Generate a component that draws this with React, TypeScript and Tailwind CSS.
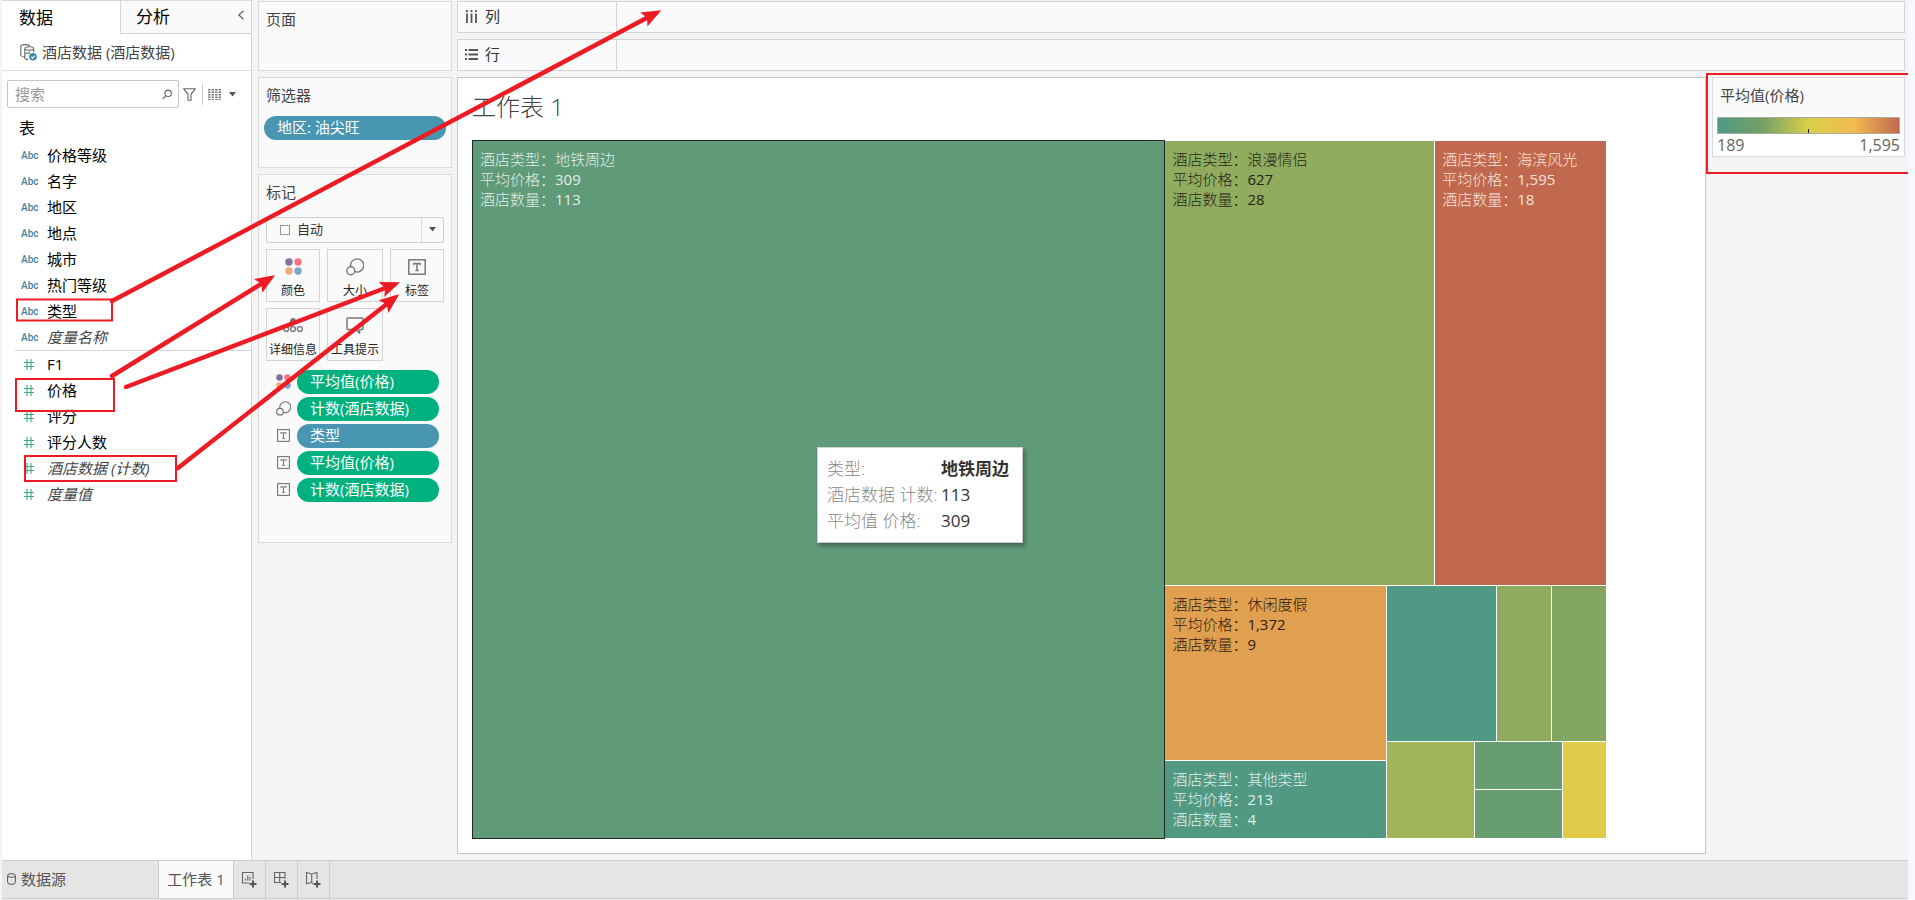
import type { ReactNode } from 'react';

type Field = { name: string; italic?: boolean };

const dimensions: Field[] = [
  { name: '价格等级' },
  { name: '名字' },
  { name: '地区' },
  { name: '地点' },
  { name: '城市' },
  { name: '热门等级' },
  { name: '类型' },
  { name: '度量名称', italic: true },
];

const measures: Field[] = [
  { name: 'F1' },
  { name: '价格' },
  { name: '评分' },
  { name: '评分人数' },
  { name: '酒店数据 (计数)', italic: true },
  { name: '度量值', italic: true },
];

function Caret() {
  return (
    <svg width="7" height="5" viewBox="0 0 7 5" aria-hidden="true">
      <path d="M0 0h7L3.5 4.5z" fill="#555" />
    </svg>
  );
}

function ColorIcon({ size }: { size: number }) {
  return (
    <svg width={size} height={size} viewBox="0 0 17 17" aria-hidden="true">
      <circle cx="4" cy="4" r="3.7" fill="#85709c" />
      <circle cx="13" cy="4" r="3.7" fill="#fa7480" />
      <circle cx="4" cy="13" r="3.7" fill="#f5a878" />
      <circle cx="13" cy="13" r="3.7" fill="#7ca3cb" />
    </svg>
  );
}

function SizeIcon({ size }: { size: number }) {
  return (
    <svg width={size} height={size} viewBox="0 0 18 18" fill="none" stroke="#777" strokeWidth="1.4" aria-hidden="true">
      <path d="M4.600 8.500A6.600 6.600 0 1 1 8.900 13.700" />
      <circle cx="4.800" cy="12.800" r="4" />
    </svg>
  );
}

function LabelIcon({ small }: { small?: boolean }) {
  return (
    <svg width={small ? 13 : 18} height={small ? 13 : 16} viewBox={small ? '0 0 13 13' : '0 0 18 16'} fill="none" stroke="#777" aria-hidden="true">
      {small ? (
        <>
          <rect x="0.6" y="0.6" width="11.8" height="11.8" strokeWidth="1.1" />
          <path d="M4 5V3.7h5V5M6.5 3.7v5.8M5.2 9.5h2.6" strokeWidth="1.1" />
        </>
      ) : (
        <>
          <rect x="0.8" y="0.8" width="16.4" height="14.4" strokeWidth="1.5" />
          <path d="M6 6.2V4.5h6v1.7M9 4.5v7M7.3 11.5h3.4" strokeWidth="1.5" />
        </>
      )}
    </svg>
  );
}

function DetailIcon() {
  return (
    <svg width="20" height="15" viewBox="0 0 20 15" fill="none" stroke="#777" strokeWidth="1.4" aria-hidden="true">
      <circle cx="10" cy="3" r="2.3" fill="#777" />
      <circle cx="3.2" cy="11" r="2.4" />
      <circle cx="10" cy="11" r="2.4" />
      <circle cx="16.8" cy="11" r="2.4" />
    </svg>
  );
}

function TooltipIcon() {
  return (
    <svg width="18" height="17" viewBox="0 0 18 17" fill="none" stroke="#777" strokeWidth="1.5" aria-hidden="true">
      <path d="M2 1h14a1 1 0 0 1 1 1v9.5a1 1 0 0 1-1 1h-2.5V16L9.8 12.5H2a1 1 0 0 1-1-1V2a1 1 0 0 1 1-1z" />
    </svg>
  );
}

function DataPane() {
  return (
    <aside className="flex w-[250px] shrink-0 flex-col border-r border-[#d4d4d4] bg-white">
      <div className="flex h-[34px] border-t border-[#d9d9d9]">
        <button type="button" className="w-[118px] pl-[17px] text-left text-[17px] text-black">数据</button>
        <div className="flex flex-1 items-center justify-between border-b border-l border-[#d4d4d4] bg-[#fafafa] pr-1.5 pl-[15px]">
          <button type="button" className="text-[17px] text-black">分析</button>
          <button type="button" aria-label="折叠" className="pb-1">
            <svg width="8" height="10" viewBox="0 0 8 10" fill="none" stroke="#666" strokeWidth="1.3"><path d="M6.5 .8 1.8 5l4.7 4.2" /></svg>
          </button>
        </div>
      </div>
      <button type="button" className="flex h-[37px] items-center gap-[5px] border-b border-[#dedede] pl-[18px] text-[15px] text-[#444]">
        <svg width="17" height="17" viewBox="0 0 17 17" fill="none" stroke="#666" strokeWidth="1.1" aria-hidden="true">
          <path d="M5 13C2.5 13 .8 12 .8 11V2.3C.8 1.3 2.4.6 5 .6s4.5.7 4.5 1.7" />
          <path d="M9.5 2.8c2.6 0 4.2.7 4.2 1.6v3.8M4.8 4.4c0-.9 2-1.6 4.7-1.6M4.8 4.4v9.3c0 1 1.6 1.8 3.4 1.9M4.8 4.6c0 1 2 1.7 4.6 1.7s4.2-.7 4.2-1.7M4.8 9.3h4.5V7.5" />
          <circle cx="13" cy="12.8" r="3.8" fill="#3c87a5" stroke="none" />
          <path d="m11.2 12.8 1.4 1.4 2.3-2.6" stroke="#fff" />
        </svg>
        <span>酒店数据 (酒店数据)</span>
      </button>
      <div className="mt-[9px] flex h-7 items-center pl-[5px]">
        <label className="flex h-7 w-[172px] items-center rounded-xs border border-[#c6c6c6] pr-1.5 pl-[7px]">
          <input type="text" aria-label="搜索" placeholder="搜索" className="w-full min-w-0 text-[15px] outline-none placeholder:text-[#999]" />
          <svg width="11" height="11" viewBox="0 0 11 11" fill="none" stroke="#666" strokeWidth="1.2" aria-hidden="true"><circle cx="6.6" cy="4.2" r="3.4" /><path d="M4.2 6.8.8 10.3" /></svg>
        </label>
        <button type="button" aria-label="筛选" className="ml-1">
          <svg width="13" height="13" viewBox="0 0 13 13" fill="none" stroke="#666" strokeWidth="1.1"><path d="M.8.8h11.4L8 6.3v5.9H5V6.3z" /></svg>
        </button>
        <button type="button" aria-label="视图" className="ml-1.5 flex h-[22px] items-center gap-2 border-l border-[#ccc] pl-[5px]">
          <svg width="13" height="11" viewBox="0 0 13 11" fill="none" stroke="#777" strokeWidth="2.4"><path d="M1.3 0v11M4.8 0v11M8.3 0v11M11.8 0v11" strokeDasharray="1.6 .9" /></svg>
          <Caret />
        </button>
      </div>
      <h2 className="mt-1.5 flex h-7 items-center pl-[17px] text-base text-black">表</h2>
      <ul>
        {dimensions.map((f) => (
          <li key={f.name} className="flex h-[26px] items-center pl-[19px]">
            <span className="w-[26px] font-['Roboto'] text-[10px] font-medium text-[#3f819c]">Abc</span>
            <span className={f.italic ? 'text-[15px] text-[#444] italic' : 'text-[15px] text-black'}>{f.name}</span>
          </li>
        ))}
      </ul>
      <ul className="ml-[13px] border-t border-[#d4d4d4]">
        {measures.map((f) => (
          <li key={f.name} className="flex h-[26px] items-center pl-[9px]">
            <span className="w-[23px]">
              <svg width="10" height="11" viewBox="0 0 10 11" stroke="#3da983" strokeWidth="1.1" aria-hidden="true"><path d="M3 0v11M7 0v11M0 3.5h10M0 7.5h10" /></svg>
            </span>
            <span className={f.italic ? 'text-[15px] text-[#444] italic' : 'text-[15px] text-black'}>{f.name}</span>
          </li>
        ))}
      </ul>
    </aside>
  );
}

function MarkButton({ label, icon }: { label: string; icon: ReactNode }) {
  return (
    <button type="button" className="flex h-[53px] flex-col items-center justify-between border border-[#d4d4d4] pt-2 text-xs text-[#222]">
      <span className="flex h-[18px] items-center">{icon}</span>
      <span className="leading-5 whitespace-nowrap">{label}</span>
    </button>
  );
}

function Pill({ icon, label, blue }: { icon: ReactNode; label: string; blue?: boolean }) {
  return (
    <div className="flex h-6 items-center">
      <span className="flex w-4 items-center justify-center">{icon}</span>
      <button type="button" className={blue
        ? 'ml-1.5 h-6 flex-1 rounded-full bg-[#4996b2] pl-[13px] text-left text-[15px] text-white'
        : 'ml-1.5 h-6 flex-1 rounded-full bg-[#00b180] pl-[13px] text-left text-[15px] text-white'}>{label}</button>
    </div>
  );
}

function Cards() {
  return (
    <section className="flex w-[194px] shrink-0 flex-col gap-1.5 text-[15px] text-[#444]">
      <div className="h-[70px] border border-[#dadada] bg-[#fafafa] pt-1.5 pl-[7px]">页面</div>
      <div className="h-[91px] border border-[#dadada] bg-[#fafafa] px-[5px] pt-1.5">
        <h3 className="pl-0.5">筛选器</h3>
        <button type="button" className="mt-[9px] h-6 w-full rounded-full bg-[#4996b2] pl-[13px] text-left text-white">地区: 油尖旺</button>
      </div>
      <div className="h-[369px] border border-[#dadada] bg-[#fafafa] pt-1.5 pr-[7px] pl-[7px]">
        <h3>标记</h3>
        <label className="relative mt-[13px] block h-[26px]">
          <select aria-label="标记类型" className="h-full w-full appearance-none rounded-xs border border-[#d0d0d0] bg-[#fafafa] pl-[30px] text-[13px] text-[#333]">
            <option>自动</option>
          </select>
          <span className="absolute top-2 left-3.5 size-2.5 border border-[#999]" />
          <span className="pointer-events-none absolute top-px right-px bottom-px flex w-[22px] items-center justify-center border-l border-[#dadada]"><Caret /></span>
        </label>
        <div className="mt-1.5 grid grid-cols-[54px_56px_54px] justify-between gap-y-1.5">
          <MarkButton label="颜色" icon={<ColorIcon size={17} />} />
          <MarkButton label="大小" icon={<SizeIcon size={18} />} />
          <MarkButton label="标签" icon={<LabelIcon />} />
          <MarkButton label="详细信息" icon={<DetailIcon />} />
          <MarkButton label="工具提示" icon={<TooltipIcon />} />
        </div>
        <div className="mt-[9px] flex flex-col gap-[3px] pr-[5px] pl-[9px]">
          <Pill icon={<ColorIcon size={15} />} label="平均值(价格)" />
          <Pill icon={<SizeIcon size={15} />} label="计数(酒店数据)" />
          <Pill icon={<LabelIcon small />} label="类型" blue />
          <Pill icon={<LabelIcon small />} label="平均值(价格)" />
          <Pill icon={<LabelIcon small />} label="计数(酒店数据)" />
        </div>
      </div>
    </section>
  );
}

function Shelf({ label, icon }: { label: string; icon: ReactNode }) {
  return (
    <div className="flex h-8 border border-[#d4d4d4] bg-[#fafafa] text-[15px] text-[#333]">
      <div className="flex w-[159px] items-center gap-[7px] border-r border-[#d4d4d4] pb-0.5 pl-[7px]">
        {icon}
        <span>{label}</span>
      </div>
    </div>
  );
}

function TileText({ type, price, count }: { type: string; price: string; count: string }) {
  return (
    <p className="pt-2 pl-[7px] text-[15px] leading-[20px] font-light whitespace-nowrap">
      酒店类型：{type}<br />平均价格：<span className="font-normal">{price}</span><br />酒店数量：<span className="font-normal">{count}</span>
    </p>
  );
}

function Treemap() {
  return (
    <div className="relative mr-[99px] grid min-h-[699px] flex-1 grid-cols-[694fr_441fr]">
      <div className="border border-[#1c2b22] bg-[#5f9a79] text-[#e3eee6]">
        <TileText type="地铁周边" price="309" count="113" />
      </div>
      <div className="grid grid-rows-[445fr_252fr] gap-px py-px">
        <div className="grid grid-cols-[269fr_171fr] gap-px">
          <div className="bg-[#91ac5e] text-[#1f2716]"><TileText type="浪漫情侣" price="627" count="28" /></div>
          <div className="bg-[#c1694e] text-[#f6e3dd]"><TileText type="海滨风光" price="1,595" count="18" /></div>
        </div>
        <div className="grid grid-cols-[221fr_219fr] gap-px">
          <div className="grid grid-rows-[174fr_77fr] gap-px">
            <div className="bg-[#e19f50] text-[#2d2011]"><TileText type="休闲度假" price="1,372" count="9" /></div>
            <div className="bg-[#529984] text-[#e0efeb]"><TileText type="其他类型" price="213" count="4" /></div>
          </div>
          <div className="grid grid-rows-[155fr_96fr] gap-px">
            <div className="grid grid-cols-[109fr_55fr_54fr] gap-px">
              <div className="bg-[#509985]" />
              <div className="bg-[#8fab5e]" />
              <div className="bg-[#82a562]" />
            </div>
            <div className="grid grid-cols-[87fr_88fr_43fr] gap-px">
              <div className="bg-[#a2b459]" />
              <div className="grid grid-rows-[47fr_48fr] gap-px">
                <div className="bg-[#689d70]" />
                <div className="bg-[#689d70]" />
              </div>
              <div className="bg-[#dfcb48]" />
            </div>
          </div>
        </div>
      </div>
      <div role="tooltip" className="absolute top-[307px] left-[345px] border border-[#cfcfcf] bg-white py-2 pr-[13px] pl-[9px] shadow-[2px_3px_4px_rgba(0,0,0,0.35)]">
        <dl className="grid grid-cols-[114px_auto] text-[17px] leading-[26px] font-light whitespace-nowrap text-[#888]">
          <dt>类型:</dt><dd className="font-bold text-[#333]">地铁周边</dd>
          <dt>酒店数据 计数:</dt><dd className="font-normal text-[#333]">113</dd>
          <dt>平均值 价格:</dt><dd className="font-normal text-[#333]">309</dd>
        </dl>
      </div>
    </div>
  );
}

function Legend() {
  return (
    <aside className="relative w-[202px] shrink-0 pl-1.5">
      <div className="mr-[3px] border border-[#dadada] bg-white">
        <h3 className="h-9 bg-[#fafafa] pt-1.5 pl-[7px] text-[15px] text-[#444]">平均值(价格)</h3>
        <div className="px-1 pt-[3px]">
          <div className="flex h-[17px] items-end justify-center border border-[#a9a99c] bg-[linear-gradient(90deg,#509985_0%,#74a165_25%,#d9cf48_50%,#f2bb50_75%,#c1694e_100%)]">
            <span className="h-1 w-px bg-[#222]" />
          </div>
          <div className="flex justify-between text-base leading-[22px] text-[#666]"><span>189</span><span>1,595</span></div>
        </div>
      </div>
      <div className="pointer-events-none absolute -top-1 right-0 left-0 h-[101px] border-2 border-r-0 border-[#ed1c24]" />
    </aside>
  );
}

function Plus() {
  return <path d="M12 9.500v7M8.500 13h7" strokeWidth="2" stroke="#555" />;
}

function SheetBar() {
  return (
    <footer className="border-t border-[#cdcdcd] bg-[#e5e5e5]">
      <div className="flex h-[37px] text-[15px] text-[#555]">
        <button type="button" className="flex w-[157px] items-center gap-[5px] border-r border-[#cdcdcd] pb-px pl-[5px]">
          <svg width="9" height="12" viewBox="0 0 9 12" fill="none" stroke="#555" aria-hidden="true"><rect x=".6" y=".8" width="7.8" height="10.4" rx="2.4" /><path d="M.8 3.4c1 1.2 6.400 1.200 7.400 0" /></svg>
          数据源
        </button>
        <button type="button" className="w-[75px] border-r border-[#cdcdcd] bg-[#fafafa] pb-px">工作表 1</button>
        <button type="button" aria-label="新建工作表" className="flex w-8 items-center justify-center border-r border-[#cdcdcd]">
          <svg width="17" height="17" viewBox="0 0 17 17" fill="none" stroke="#666" strokeWidth="1.1"><path d="M8 12H1.500V1.500H12V8M4.500 9.500V7.500M6.800 9.500V4.500M9 9.500V6" /><Plus /></svg>
        </button>
        <button type="button" aria-label="新建仪表板" className="flex w-8 items-center justify-center border-r border-[#cdcdcd]">
          <svg width="17" height="17" viewBox="0 0 17 17" fill="none" stroke="#666" strokeWidth="1.1"><path d="M8 11.500H1.500V1.500H12V8M1.500 6.500H12M6.700 1.500v10" /><Plus /></svg>
        </button>
        <button type="button" aria-label="新建故事" className="flex w-8 items-center justify-center border-r border-[#cdcdcd]">
          <svg width="17" height="17" viewBox="0 0 17 17" fill="none" stroke="#666" strokeWidth="1.1"><path d="M8 12.500 6.700 11.500 1.500 12.500V1.500L6.700 3 12 1.500V8M6.700 3v9" /><Plus /></svg>
        </button>
      </div>
      <div className="h-0.5 border-t border-[#cdcdcd] bg-[#ebebeb]" />
    </footer>
  );
}

function Annotations() {
  return (
    <svg className="pointer-events-none absolute top-0 left-0" width="700" height="500" viewBox="0 0 700 500" fill="none" stroke="#ed1c24" aria-hidden="true">
      <defs>
        <marker id="head" markerUnits="userSpaceOnUse" markerWidth="22" markerHeight="18" refX="14" refY="9" orient="auto">
          <path d="M20 9 0 17 4 9 0 1z" fill="#ed1c24" stroke="none" />
        </marker>
      </defs>
      <g strokeWidth="2">
        <rect x="17" y="299.500" width="95" height="21" />
        <rect x="16" y="379" width="98" height="32" />
        <rect x="25" y="456" width="151" height="25" />
      </g>
      <g strokeWidth="4.500" strokeLinecap="round">
        <path d="M112 301 656 13" markerEnd="url(#head)" />
        <path d="M112 376 270 278.500" markerEnd="url(#head)" />
        <path d="M126 387 394.500 284.500" markerEnd="url(#head)" />
        <path d="M178 468 394.500 298" markerEnd="url(#head)" />
      </g>
    </svg>
  );
}

export default function App() {
  return (
    <div className="relative flex min-h-screen flex-col border-r-[7px] border-[#f6f8fc] bg-[#f4f4f4] pl-0.5 font-['Open_Sans','Noto_Sans_CJK_SC',sans-serif]">
      <div className="flex flex-1">
        <DataPane />
        <main className="flex min-w-0 flex-1 gap-[5px] pt-px pl-1.5">
          <Cards />
          <div className="flex min-w-0 flex-1 flex-col gap-1.5">
            <div className="mr-[3px] flex flex-col gap-1.5">
              <Shelf label="列" icon={<svg width="13" height="13" viewBox="0 0 13 13" stroke="#555" strokeWidth="1.800" aria-hidden="true"><path d="M2 0v2M6.500 0v2M11 0v2M2 3.500V13M6.500 3.500V13M11 3.500V13" /></svg>} />
              <Shelf label="行" icon={<svg width="13" height="11" viewBox="0 0 13 11" stroke="#555" strokeWidth="1.800" aria-hidden="true"><path d="M0 1h2M0 5.500h2M0 10h2M3.500 1H13M3.500 5.500H13M3.500 10H13" /></svg>} />
            </div>
            <div className="flex flex-1">
              <section className="mb-1.5 flex min-w-0 flex-1 flex-col border border-[#c6c6c6] bg-white pb-3.5 pl-3.5">
                <h1 className="flex h-[62px] items-center pb-1 text-2xl font-light text-[#444]">工作表 1</h1>
                <Treemap />
              </section>
              <Legend />
            </div>
          </div>
        </main>
      </div>
      <SheetBar />
      <Annotations />
    </div>
  );
}
